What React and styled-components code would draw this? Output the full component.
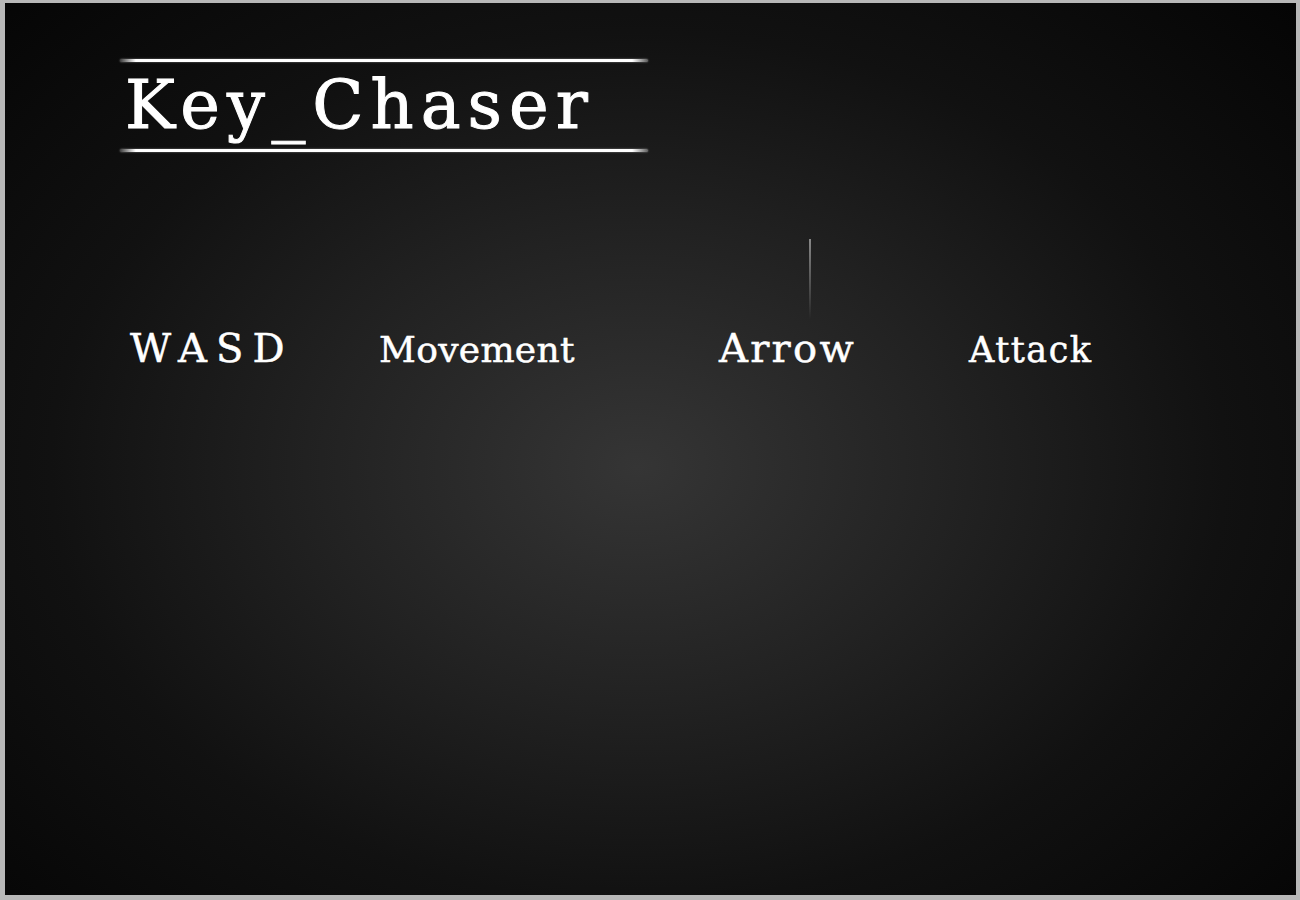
import React from "react";
import styled, { createGlobalStyle } from "styled-components";

const Global = createGlobalStyle`
  html, body { margin: 0; padding: 0; background: #b8b8b8; }
  body { font-family: "DejaVu Serif", serif; }
`;

const Page = styled.div`
  width: 1300px;
  height: 900px;
  box-sizing: border-box;
  padding: 3px 4px 5px 5px;
  background: #b8b8b8;
`;

const Board = styled.div`
  height: 100%;
  display: flex;
  flex-direction: column;
  align-items: flex-start;
  background: radial-gradient(
    ellipse 70% 75% at 49% 52%,
    #353535 0%,
    #222 35%,
    #111 65%,
    #050505 100%
  );
  padding: 56px 0 0 115px;
  box-sizing: border-box;
  overflow: hidden;
`;

const TitleBlock = styled.div`
  width: 528px;
  display: flex;
  flex-direction: column;
`;

const Rule = styled.div`
  height: 3px;
  border-radius: 2px;
  background: linear-gradient(
    to right,
    rgba(255, 255, 255, 0.2) 0%,
    #fff 3%,
    #fff 97%,
    rgba(255, 255, 255, 0.3) 100%
  );
  box-shadow: 0 0 2px rgba(255, 255, 255, 0.5);
`;

const Title = styled.h1`
  margin: 0;
  padding: 2px 0 2px 5px;
  font-family: "DejaVu Serif", serif;
  font-weight: normal;
  font-size: 67px;
  line-height: 83px;
  letter-spacing: 7px;
  color: #fff;
  -webkit-text-stroke: 1px #fff;
  white-space: nowrap;
`;

const Tick = styled.div`
  margin: 87px 0 0 689px;
  width: 2px;
  height: 80px;
  background: linear-gradient(to bottom, #888, #444 70%, rgba(60, 60, 60, 0));
`;

const Row = styled.div`
  display: grid;
  grid-template-columns: 249px 340px 250px auto;
  align-items: baseline;
  margin-top: 9px;
  padding-left: 10px;
`;

const Label = styled.span`
  font-family: "DejaVu Serif", serif;
  color: #fff;
  font-size: ${(p) => p.$size}px;
  letter-spacing: ${(p) => p.$spacing}px;
  -webkit-text-stroke: 0.5px #fff;
  line-height: 1;
  white-space: nowrap;
`;

export default function App() {
  return (
    <>
      <Global />
      <Page>
        <Board>
          <TitleBlock>
            <Rule />
            <Title>Key_Chaser</Title>
            <Rule />
          </TitleBlock>
          <Tick />
          <Row>
            <Label $size={40} $spacing={9}>WASD</Label>
            <Label $size={36} $spacing={0.3}>Movement</Label>
            <Label $size={40} $spacing={2.3}>Arrow</Label>
            <Label $size={35} $spacing={1.5}>Attack</Label>
          </Row>
        </Board>
      </Page>
    </>
  );
}
